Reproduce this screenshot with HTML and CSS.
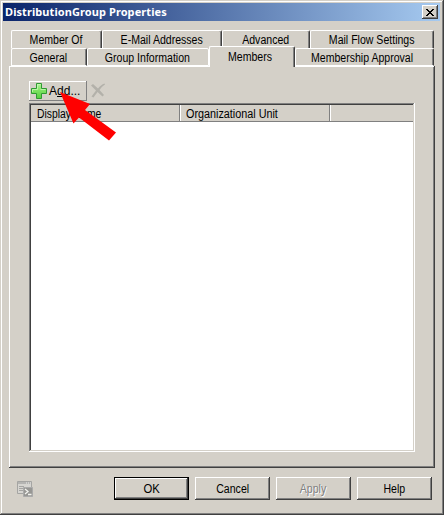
FILE: index.html
```html
<!DOCTYPE html>
<html lang="en">
<head>
<meta charset="utf-8">
<title>DistributionGroup Properties</title>
<link rel="stylesheet" href="styles.css">
</head>
<body>
<main class="window">
  <header class="titlebar">
    <h1>DistributionGroup Properties</h1>
    <button class="close" aria-label="Close"><svg width="8" height="7" viewBox="0 0 8 7" shape-rendering="crispEdges"><path d="M0 0h2v1h1v1h2V1h1V0h2v1H7v1H6v1H5v1h1v1h1v1h1v1H6V6H5V5H3v1H2v1H0V6h1V5h1V4h1V3H2V2H1V1H0z" fill="#000"/></svg></button>
  </header>
  <nav class="tabs">
    <div class="row back">
      <div class="tab member-of"><span>Member Of</span></div>
      <div class="tab email"><span>E-Mail Addresses</span></div>
      <div class="tab advanced"><span>Advanced</span></div>
      <div class="tab mail-flow"><span>Mail Flow Settings</span></div>
    </div>
    <div class="row front">
      <div class="tab general"><span>General</span></div>
      <div class="tab group-info"><span>Group Information</span></div>
      <div class="tab members selected"><span>Members</span></div>
      <div class="tab approval"><span>Membership Approval</span></div>
    </div>
  </nav>
  <section class="page">
    <div class="toolbar">
      <button class="add">
        <svg width="18" height="18" viewBox="0 0 18 18"><defs><linearGradient id="green" x1="0" y1="0" x2="0" y2="1"><stop offset="0" stop-color="#b4f59a"/><stop offset=".5" stop-color="#7be060"/><stop offset="1" stop-color="#55cf3e"/></linearGradient></defs><path d="M6.500 1.500h5v5h5v5h-5v5h-5v-5h-5v-5h5z" fill="url(#green)" stroke="#2f9a32" stroke-linejoin="round"/><path d="M7.500 7.500v-5h3M2.500 10V7.500h5M10.500 7.500h5" fill="none" stroke="#cbfbb9" opacity=".75"/></svg>
        <span>A<u>d</u>d...</span>
      </button>
      <svg class="remove" width="16" height="16" viewBox="0 0 16 16"><path d="M1 2.500 3 1l5 4.500C10 3 12 1.500 14.500.5l.5 1C12.500 3 11 5 9.500 7l4.500 5-1.500 1.500-5-4.500c-1.500 2-2.500 3.500-4 5.500L1.500 13.500c1.500-2 3-4 4.500-6z" fill="#b3b1aa"/></svg>
    </div>
    <div class="list">
      <div class="list-head">
        <div class="column name"><span>Display Name</span></div>
        <div class="column unit"><span>Organizational Unit</span></div>
        <div class="column rest"></div>
      </div>
    </div>
  </section>
  <footer class="actions">
    <svg class="script" width="17" height="17" viewBox="0 0 17 17"><path d="M.5.5h14v12H.5z" fill="#d6d5d1" stroke="#a5a5a3"/><path d="M1 1h13v2H1z" fill="#b4b4b2"/><path d="M9 2h1m1 0h1m1 0h1" stroke="#eee"/><path d="M2 5.500h5M2 7.500h4M2 9.500h5" stroke="#a5a5a3"/><path d="M6.500 6.500h9v9h-9z" fill="#979794" stroke="#aaa"/><path d="m8 8 3 2.500L8 13M11 13.500h3.500" stroke="#f3f3ef" stroke-width="1.300" fill="none"/></svg>
    <button class="button default"><span>OK</span></button>
    <button class="button"><span>Cancel</span></button>
    <button class="button disabled"><span>Apply</span></button>
    <button class="button"><span>Help</span></button>
  </footer>
  <svg class="pointer" width="58" height="52" viewBox="0 0 58 52"><path d="M0 0 30 12 25 18 56 40.500 49 48.500 19 25.500 13.500 31.500z" fill="#f00"/></svg>
</main>
</body>
</html>
```
FILE: styles.css
```css
* { box-sizing: border-box; }
body {
  margin: 0;
  background: #d4d0c8;
  color: #000;
  font: 12px/14px "Liberation Sans", Arial, sans-serif;
}
button {
  margin: 0;
  padding: 0;
  border: 0;
  background: #d4d0c8;
  color: inherit;
  font: inherit;
}
span { display: inline-block; transform: scaleX(.88); white-space: pre; }
.window {
  position: relative;
  width: 444px;
  height: 515px;
  padding: 3px 4px 0 3px;
  background: #d4d0c8;
  box-shadow: inset -1px -1px #404040, inset 1px 1px #d4d0c8, inset -2px -2px #808080, inset 2px 2px #fff;
}
.titlebar {
  display: flex;
  align-items: center;
  height: 18px;
  padding: 0 2px;
  background: linear-gradient(90deg, #0a246a, #a6caf0);
}
h1 {
  flex: 1;
  margin: 0;
  color: #fff;
  font: bold 11px/16px "Noto Sans", "Open Sans", sans-serif;
  letter-spacing: .08px;
}
.close {
  display: flex;
  align-items: center;
  justify-content: center;
  width: 16px;
  height: 14px;
  box-shadow: inset -1px -1px #404040, inset 1px 1px #fff, inset -2px -2px #808080;
}
.tabs { padding: 9px 0 0 8px; }
.row { display: flex; height: 18px; }
.tab {
  position: relative;
  height: 18px;
  padding-top: 2px;
  text-align: center;
  border: 1px solid #fff;
  border-right-color: #404040;
  border-bottom: 0;
  border-radius: 2px 2px 0 0;
  box-shadow: inset -1px 0 #808080;
  background: #d4d0c8;
}
.front .tab { border-bottom: 1px solid #fff; }
.member-of { width: 91px; }
.email { width: 120px; }
.advanced { width: 88px; }
.mail-flow { width: 124px; }
.general { width: 76px; padding-right: 2px; }
.group-info { width: 122px; padding-right: 2px; border-right-color: #fff; box-shadow: none; }
.front .selected { z-index: 1; width: 86px; height: 21px; margin-top: -2px; padding: 3px 3px 0 0; border-bottom: 0; }
.approval { width: 139px; padding-right: 5px; }
.page {
  width: 426px;
  height: 402px;
  margin-left: 6px;
  padding: 15px 20px 0;
  box-shadow: inset -1px -1px #404040, inset 1px 1px #fff, inset -2px -2px #808080;
}
.toolbar { display: flex; height: 22px; }
.add {
  display: flex;
  align-items: center;
  width: 58px;
  height: 20px;
  padding-left: 1px;
  box-shadow: inset -1px -1px #808080, inset 1px 1px #fff;
}
.add span { margin-left: 1px; transform-origin: left; transform: scaleX(1); }
.remove { margin: 2px 0 0 3px; }
.list {
  width: 386px;
  height: 349px;
  padding: 2px;
  background: #fff;
  box-shadow: inset -1px -1px #fff, inset 1px 1px #808080, inset -2px -2px #d4d0c8, inset 2px 2px #404040;
}
.list-head { display: flex; height: 17px; }
.column {
  padding: 2px 0 0 6px;
  background: #d4d0c8;
  box-shadow: inset -1px -1px #808080, inset 1px 0 #fff;
}
.column span { transform-origin: left; }
.name { width: 149px; box-shadow: inset -1px -1px #808080; }
.name span { transform: scaleX(.86); }
.unit { width: 150px; }
.unit span { transform: scaleX(.9); }
.rest { flex: 1; box-shadow: inset 0 -1px #808080, inset 1px 0 #fff; }
.actions { display: flex; gap: 6px; padding: 9px 0 0 14px; }
.script { margin: 4px 74px 0 0; }
.button {
  width: 75px;
  height: 23px;
  box-shadow: inset -1px -1px #404040, inset 1px 1px #fff, inset -2px -2px #808080;
}
.default { border: 1px solid #000; }
.default span { transform: scaleX(.94); }
.disabled { color: #808080; text-shadow: 1px 1px #fff; }
.pointer { position: absolute; left: 60px; top: 92px; }
```
